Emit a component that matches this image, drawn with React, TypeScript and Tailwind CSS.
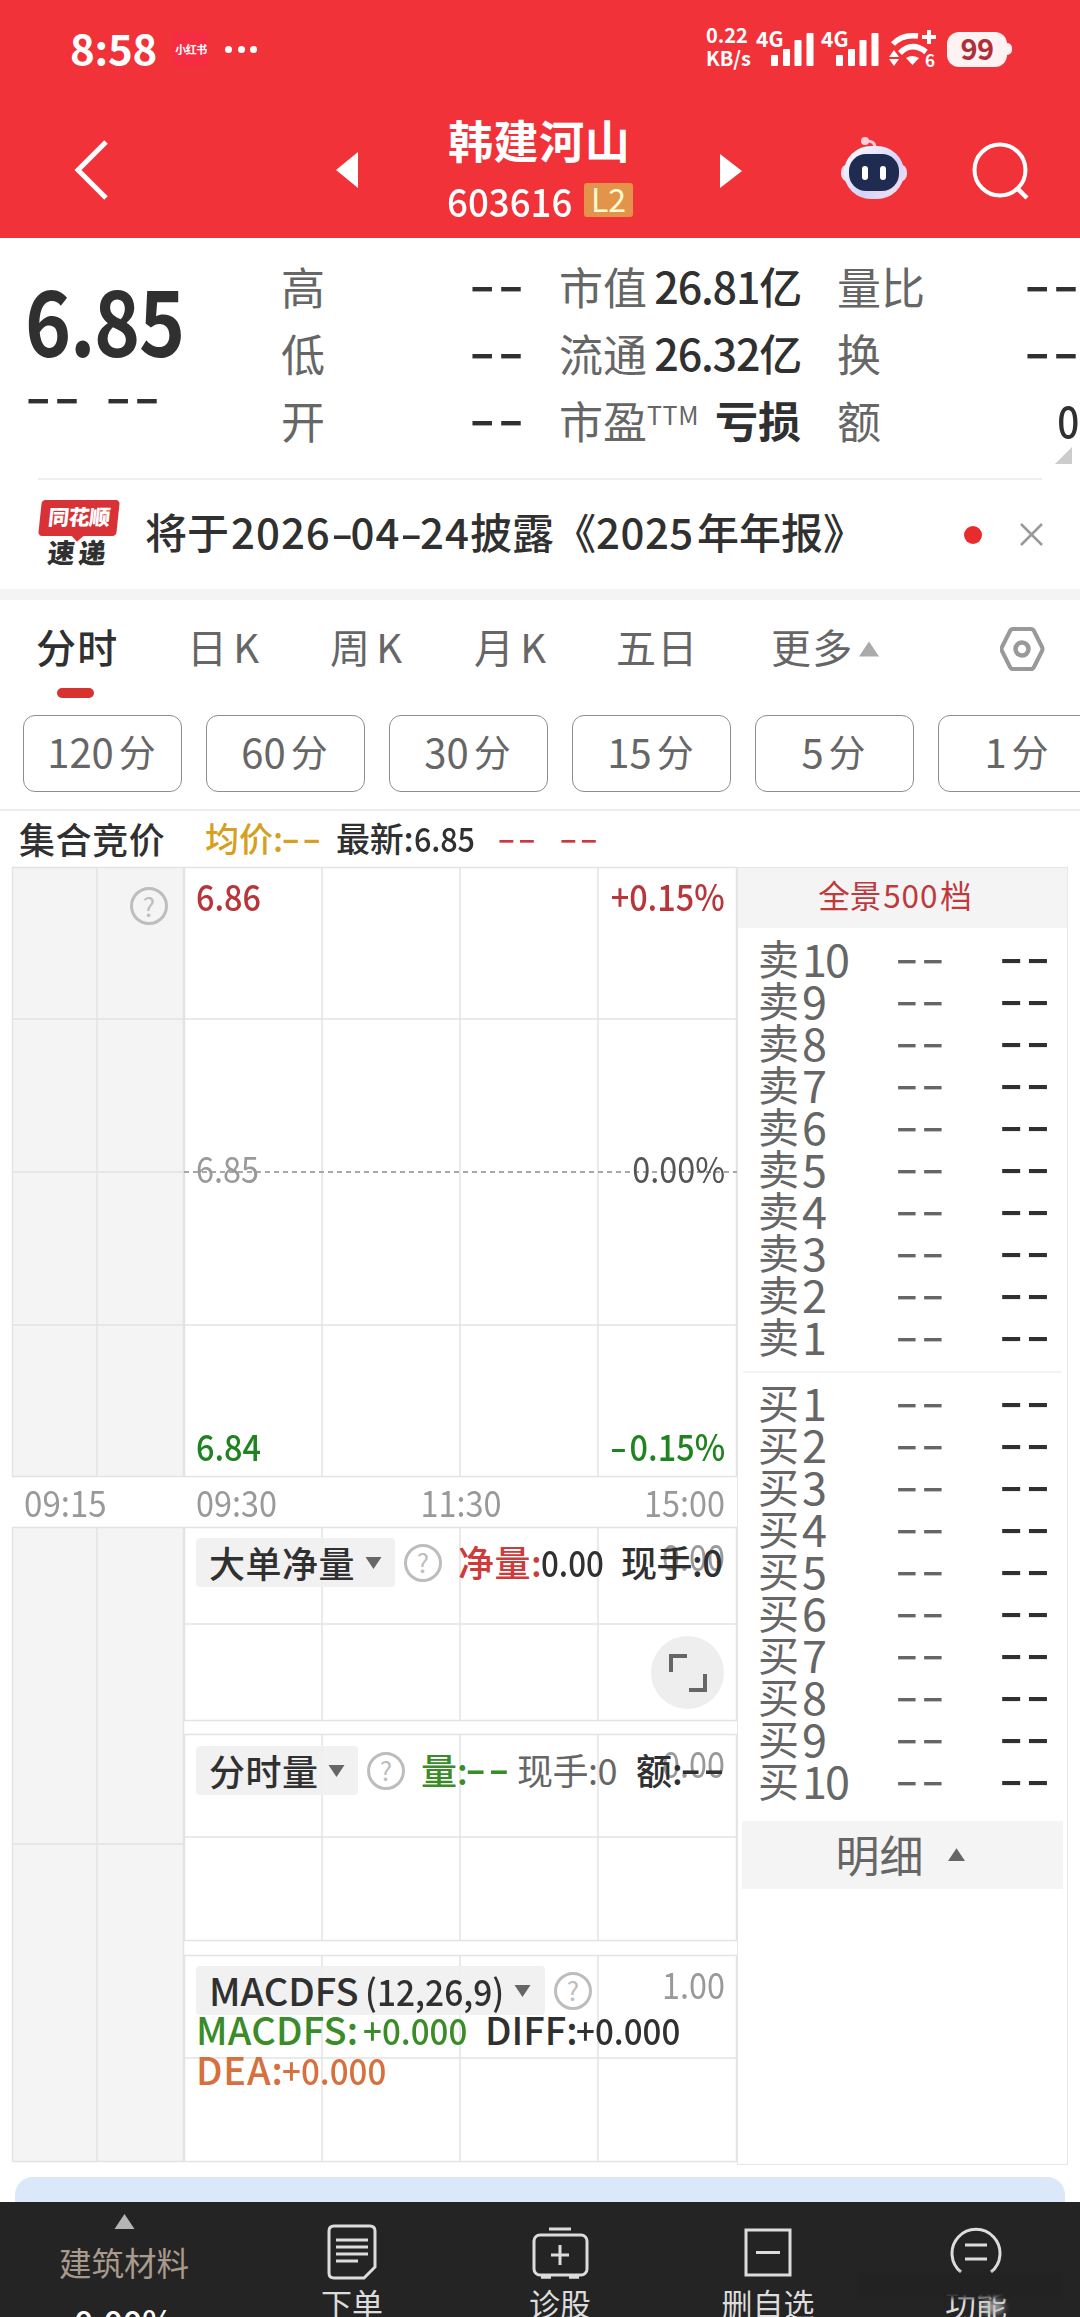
import { clsx } from "clsx";

interface DashProps {
  className?: string;
}

interface GridProps {
  width: number;
  height: number;
  xs: number[];
  ys: number[];
  className?: string;
  dashedY?: number;
}

const SELL = [10, 9, 8, 7, 6, 5, 4, 3, 2, 1];
const BUY = [1, 2, 3, 4, 5, 6, 7, 8, 9, 10];

const PERIODS = ["120", "60", "30", "15", "5", "1"];

// Empty value placeholder, stretched to the width of the quote digits.
const Dash = ({ className }: DashProps) => (
  <span className={clsx("inline-block w-[0.91em] shrink-0 pb-[0.12em] leading-none", className)}>
    <span className="inline-block origin-left scale-x-[1.42] tracking-[0.034em] whitespace-nowrap -ml-[0.06em]">
      --
    </span>
  </span>
);

const Grid = ({ width, height, xs, ys, className, dashedY }: GridProps) => (
  <svg
    width={width}
    height={height}
    className={clsx("block overflow-visible", className)}
    fill="none"
    stroke="#e2e4e4"
    strokeWidth="1.5"
  >
    <rect x="0.5" y="0.5" width={width - 1} height={height - 1} />
    {xs.map((x) => (
      <path key={x} d={`M${x} 0V${height}`} />
    ))}
    {ys.map((y) => (
      <path key={y} d={`M0 ${y}H${width}`} />
    ))}
    {dashedY && (
      <path d={`M0 ${dashedY}H${width}`} stroke="#a8a8a8" strokeWidth="2" strokeDasharray="5 4" />
    )}
  </svg>
);

const Help = ({ className }: DashProps) => (
  <span
    className={clsx(
      "flex size-[38px] shrink-0 items-center justify-center rounded-full border-[3px] border-[#bdbdbd] pb-px text-[26px] leading-none text-[#bdbdbd]",
      className,
    )}
  >
    ?
  </span>
);

const Caret = ({ up, className }: { up?: boolean; className?: string }) => (
  <svg viewBox="0 0 16 12" className={clsx("shrink-0", className)} fill="currentColor">
    <path d={up ? "M8 0L16 12H0Z" : "M0 0H16L8 12Z"} />
  </svg>
);

const Signal = () => (
  <div className="flex">
    <span className="h-[16px] text-[21px] leading-[14px] font-bold tracking-[0.2px]">4G</span>
    <svg width="43" height="36" className="-ml-[13px]" fill="#fff">
      <rect x="0" y="24" width="7" height="11" rx="1" />
      <rect x="12" y="18" width="7" height="17" rx="1" />
      <rect x="23.5" y="9" width="7" height="26" rx="1" />
      <rect x="35.5" y="2" width="7" height="33" rx="1" />
    </svg>
  </div>
);

const StatusBar = () => (
  <div className="flex h-[98px] items-center text-white">
    <span className="ml-[70px] w-[87px] pb-[4px] text-[42px] leading-none font-bold tracking-[-0.2px] whitespace-nowrap">
      8:58
    </span>
    <span className="ml-[16px] flex h-[36px] w-[36px] items-center justify-center rounded-lg bg-[#f62c42] text-[11px] leading-none font-bold tracking-[-0.5px] whitespace-nowrap">
      小红书
    </span>
    <span className="ml-[16px] flex w-[32px] justify-between">
      <i className="size-[7px] rounded-full bg-white" />
      <i className="size-[7px] rounded-full bg-white" />
      <i className="size-[7px] rounded-full bg-white" />
    </span>
    <div className="ml-[449px] w-[49px] pb-[7px] text-[20px] leading-[23px] font-bold">
      <div>0.22</div>
      <div className="text-[20px]">KB/s</div>
    </div>
    <div className="ml-[1px] w-[65px]">
      <Signal />
    </div>
    <div className="w-[65px]">
      <Signal />
    </div>
    <svg width="50" height="40" viewBox="0 0 50 40" className="ml-[3px]" fill="none" stroke="#fff">
      <path d="M4 15Q13 5 29 7" strokeWidth="5.500" />
      <path d="M11 24Q23 12 37 23" strokeWidth="5.500" />
      <path d="M17 29Q23 25 30 29L23.500 36Z" fill="#fff" stroke="none" />
      <path d="M5 21L10 28H0ZM5 37L10 30H0Z" fill="#fff" stroke="none" />
      <path d="M33 8H47M40 1V15" strokeWidth="4" />
      <text x="36" y="38" fontSize="17" fontWeight="700" fill="#fff" stroke="none">
        6
      </text>
    </svg>
    <div className="ml-[8px] flex h-[35px] w-[60px] items-center justify-center rounded-[12px] bg-[#fff2f2] pb-[3px] text-[29px] leading-none font-bold tracking-[-0.5px] text-[#ae2f38]">
      99
    </div>
    <i className="h-[12px] w-[5px] rounded-r-md bg-[#fff2f2]" />
  </div>
);

const Robot = () => (
  <svg width="66" height="64" viewBox="0 0 66 64" className="ml-[99px]">
    <defs>
      <linearGradient id="shell" x1="0" y1="0" x2="1" y2="1">
        <stop offset="0" stopColor="#fff" />
        <stop offset="0.6" stopColor="#d5d3fb" />
        <stop offset="1" stopColor="#fde3ea" />
      </linearGradient>
    </defs>
    <path d="M24 5Q34 4 34 12" fill="none" stroke="#f9c9d6" strokeWidth="3" />
    <circle cx="24" cy="5" r="4" fill="#fbd0d8" />
    <rect x="0" y="28" width="66" height="18" rx="8" fill="#f1dbf0" />
    <rect x="3" y="10" width="60" height="53" rx="27" fill="url(#shell)" />
    <rect x="8" y="18" width="50" height="37" rx="17" fill="#202b52" />
    <rect x="21" y="30" width="6" height="14" rx="3" fill="#fff" />
    <rect x="39" y="30" width="6" height="14" rx="3" fill="#fff" />
  </svg>
);

const TitleBar = () => (
  <div className="flex h-[140px] items-center text-white">
    <svg width="34" height="60" className="mt-[3px] ml-[74px]" fill="none" stroke="#fff" strokeWidth="5">
      <path d="M32 2L4 30L32 58" />
    </svg>
    <svg width="22" height="36" className="mt-1 ml-[228px]" fill="#fff">
      <path d="M22 0V36L0 18Z" />
    </svg>
    <div className="ml-[90px] w-[185px]">
      <div className="text-[45px] leading-[54px] font-bold tracking-[0.6px] whitespace-nowrap">
        韩建河山
      </div>
      <div className="flex h-[56px] items-center pt-[6px]">
        <span className="-ml-px w-[137px] pt-[4px] text-[39px] leading-none font-medium">
          <span className="inline-block origin-left scale-x-[0.94]">603616</span>
        </span>
        <span className="mt-[4px] flex h-[34px] w-[49px] items-center justify-center rounded-[3px] bg-[#e3944a] pb-1 text-[32px] leading-none text-[#fffbd0]">
          L2
        </span>
      </div>
    </div>
    <svg width="22" height="34" className="mt-[5px] ml-[87px]" fill="#fff">
      <path d="M0 0V34L22 17Z" />
    </svg>
    <Robot />
    <svg width="58" height="60" className="mt-[6px] ml-[65px]" fill="none" stroke="#fff">
      <circle cx="28" cy="29" r="25.500" strokeWidth="4" />
      <path d="M45 47L55 57" strokeWidth="4.500" />
    </svg>
  </div>
);

const label = "text-[44px] leading-none text-[#666]";
const value = "text-[43px] leading-none font-medium text-[#303030] tracking-[-1.2px]";
const row = "flex h-[67px] items-center justify-between whitespace-nowrap";

const Quote = () => (
  <div className="flex h-[240px] shrink-0 pt-[14px] text-[#303030]">
    <div className="w-[255px] ml-[25px] pt-[21px]">
      <div className="h-[88px] w-[160px] origin-left scale-x-[0.86] text-[91px] leading-[88px] font-bold tracking-[-1.5px]">
        6.85
      </div>
      <div className="mt-[7px] flex gap-[33px] pl-[3px] text-[52px] font-medium leading-none">
        <Dash />
        <Dash />
      </div>
    </div>
    <div className="ml-px w-[238px]">
      {["高", "低", "开"].map((name) => (
        <div key={name} className={row}>
          <span className={label}>{name}</span>
          <Dash className="text-[52px] font-medium" />
        </div>
      ))}
    </div>
    <div className="ml-[40px] w-[242px]">
      <div className={row}>
        <span className={label}>市值</span>
        <span className={value}>26.81亿</span>
      </div>
      <div className={row}>
        <span className={label}>流通</span>
        <span className={value}>26.32亿</span>
      </div>
      <div className={row}>
        <span className={clsx(label, "flex items-start")}>
          市盈<span className="pt-[4px] text-[25px] tracking-[0.6px]">TTM</span>
        </span>
        <span className="text-[43px] leading-none font-bold">亏损</span>
      </div>
    </div>
    <div className="relative ml-[36px] w-[241px]">
      <div className={row}>
        <span className={label}>量比</span>
        <Dash className="mr-[4px] text-[52px] font-medium" />
      </div>
      <div className={row}>
        <span className={label}>换</span>
        <Dash className="mr-[4px] text-[52px] font-medium" />
      </div>
      <div className={row}>
        <span className={label}>额</span>
        <span className={clsx(value, "origin-right scale-x-[0.9]")}>0</span>
      </div>
      <svg width="17" height="17" className="absolute top-[195px] right-[6px]" fill="#ccc">
        <path d="M17 0V17H0Z" />
      </svg>
    </div>
  </div>
);

// Hyphen of a date, as wide as a digit.
const Wide = () => <span className="inline-block w-[22px] origin-left scale-x-[1.5]">-</span>;

const News = () => (
  <div className="mx-[38px] flex h-[111px] shrink-0 items-center border-t-2 border-[#efefef] text-[#303030]">
    <div className="-mt-[3px] flex w-[82px] shrink-0 flex-col items-center">
      <div className="relative flex h-[36px] w-[78px] -skew-x-6 items-center justify-center rounded-[4px] bg-[#d93236] pb-1 text-[21px] leading-none font-black tracking-[-0.5px] text-white">
        同花顺
        <i className="absolute -bottom-[4px] left-[35px] size-[9px] rotate-45 bg-[#d93236]" />
      </div>
      <div className="mt-[2px] -skew-x-6 text-[27px] leading-[28px] font-black tracking-[4px]">速递</div>
    </div>
    <div className="ml-[25px] flex w-[781px] shrink-0 pb-[8px] text-[42px] leading-none font-medium whitespace-nowrap">
      将于
      <span className="flex w-[241px] pl-[2px] tracking-[1px]">
        2026
        <Wide />
        04
        <Wide />
        24
      </span>
      披露《<span className="w-[101px] tracking-[0.5px]">2025</span>年年报》
    </div>
    <i className="ml-[38px] size-[18px] shrink-0 rounded-full bg-[#e92b2d]" />
    <svg width="23" height="23" className="ml-[38px] shrink-0" stroke="#999" strokeWidth="2.500">
      <path d="M1 1L22 22M22 1L1 22" />
    </svg>
  </div>
);

const Tabs = () => (
  <div className="relative flex h-[115px] shrink-0 pt-[26px] text-[40px] leading-[40px] tracking-[1.2px] whitespace-nowrap text-[#666]">
    <span className="ml-[36px] w-[151px] font-medium text-[#303030]">
      分时
      <i className="mt-[22px] ml-[21px] block h-[10px] w-[37px] rounded-full bg-[#d7322f]" />
    </span>
    <span className="flex w-[143px] gap-[5px]">
      日<span>K</span>
    </span>
    <span className="flex w-[144px] gap-[5px]">
      周<span>K</span>
    </span>
    <span className="flex w-[142px] gap-[5px]">
      月<span>K</span>
    </span>
    <span className="w-[155px]">五日</span>
    <span>更多</span>
    <Caret up className="mt-[14px] ml-[6px] h-[18px] w-[20px] text-[#aaa]" />
    <svg width="46" height="44" className="mt-[1px] ml-[121px]" fill="none" stroke="#999" strokeWidth="4">
      <path d="M13 2H31Q33 2 34 4L42 20Q43 22 42 24L34 40Q33 42 31 42H13Q11 42 10 40L2 24Q1 22 2 20L10 4Q11 2 13 2Z" />
      <circle cx="22" cy="22" r="6.500" strokeWidth="4.500" />
    </svg>
  </div>
);

const Periods = () => (
  <div className="flex h-[94px] shrink-0 gap-[24px] overflow-hidden pl-[23px]">
    {PERIODS.map((p) => (
      <div
        key={p}
        className="flex h-[77px] w-[159px] shrink-0 items-center justify-center rounded-[12px] border border-[#8d8d8d] pr-[2px] pb-[5px] text-[40px] leading-none text-[#666]"
      >
        {p}
        <span className="ml-[5px] text-[37px]">分</span>
      </div>
    ))}
  </div>
);

const Summary = () => (
  <div className="flex h-[58px] shrink-0 items-center border-t-2 border-[#ededed] pb-[2px] text-[34px] leading-none whitespace-nowrap text-[#303030]">
    <span className="ml-[19px] w-[186px] text-[36px] font-medium tracking-[0.6px]">集合竞价</span>
    <span className="flex w-[131px] items-center font-medium text-[#d5a021]">
      均价:
      <Dash className="text-[38px]" />
    </span>
    <span className="w-[163px] font-medium tracking-[-0.2px]">
      最新:<span className="inline-block origin-left scale-x-[0.9]">6.85</span>
    </span>
    <Dash className="text-[38px] text-[#c93a40]" />
    <Dash className="ml-[28px] text-[38px] text-[#c93a40]" />
  </div>
);

const AuctionColumn = () => (
  <div className="w-[172px] shrink-0">
    <div className="relative">
      <Grid width={172} height={610} xs={[85]} ys={[152, 305, 458]} className="bg-[#f4f4f4]" />
      <Help className="absolute top-[20px] right-[16px]" />
    </div>
    <div className="flex h-[50px] items-center pb-[2px] pl-[12px] text-[36px] leading-none text-[#999]">
      <span className="origin-left scale-x-[0.92]">09:15</span>
    </div>
    <Grid width={172} height={635} xs={[85]} ys={[317]} className="bg-[#f4f4f4]" />
  </div>
);

const chip = "flex h-[49px] items-center rounded-[4px] bg-[#f0f0f0]/90 pb-[2px] pl-[13px] font-medium text-[#303030]";
const axisLeft = "origin-left scale-x-[0.9]";
const axisRight = "origin-right scale-x-[0.9]";

const Charts = () => (
  <div className="w-[553px] shrink-0 text-[36px] leading-none whitespace-nowrap text-[#999]">
    <div className="relative">
      <Grid width={553} height={610} xs={[138, 276, 414]} ys={[152, 458]} dashedY={305} />
      <div className="absolute inset-0 flex flex-col justify-between px-[12px] pt-[10px] pb-[14px]">
        <div className="flex justify-between font-medium text-[#b8363a]">
          <span className={axisLeft}>6.86</span>
          <span className={axisRight}>+0.15%</span>
        </div>
        <div className="-mt-[7px] flex justify-between">
          <span className={axisLeft}>6.85</span>
          <span className={clsx(axisRight, "text-[#555]")}>0.00%</span>
        </div>
        <div className="flex justify-between font-medium text-[#1f831f]">
          <span className={axisLeft}>6.84</span>
          <span className={clsx(axisRight, "flex")}>
            <Wide />
            0.15%
          </span>
        </div>
      </div>
    </div>
    <div className="flex h-[50px] items-center justify-between px-[12px] pb-[2px]">
      <span className={clsx(axisLeft, "w-[90px]")}>09:30</span>
      <span className="scale-x-[0.9]">11:30</span>
      <span className={axisRight}>15:00</span>
    </div>

    <div className="relative">
      <Grid width={553} height={194} xs={[138, 276, 414]} ys={[97]} />
      <span className={clsx("absolute top-[10px] right-[12px]", axisRight)}>0.00</span>
      <div className="absolute top-[11px] left-[12px] flex items-center">
        <span className={clsx(chip, "w-[199px] tracking-[0.5px]")}>
          大单净量
          <Caret className="mt-[2px] ml-[10px] h-[12px] w-[17px] text-[#666]" />
        </span>
        <Help className="ml-[9px]" />
        <span className="ml-[16px] w-[83px] pb-[4px] font-medium tracking-[0.5px] text-[#cf3a3a]">净量:</span>
        <span className="w-[80px] origin-left scale-x-[0.87] pb-[4px] font-medium text-[#303030]">0.00</span>
        <span className="pb-[4px] font-medium tracking-[-0.5px] text-[#303030]">现手:0</span>
      </div>
      <div className="absolute top-[109px] right-[13px] flex size-[73px] items-center justify-center rounded-full bg-[#eee]">
        <svg width="38" height="38" fill="none" stroke="#666" strokeWidth="4">
          <path d="M2 18V2H18M36 20V36H20" />
        </svg>
      </div>
    </div>

    <div className="relative mt-[13px]">
      <Grid width={553} height={207} xs={[138, 276, 414]} ys={[103]} />
      <span className={clsx("absolute top-[10px] right-[12px]", axisRight)}>0.00</span>
      <div className="absolute top-[11px] left-[12px] flex items-center">
        <span className={clsx(chip, "w-[162px] tracking-[0.5px]")}>
          分时量
          <Caret className="mt-[2px] ml-[9px] h-[12px] w-[17px] text-[#666]" />
        </span>
        <Help className="ml-[9px]" />
        <span className="ml-[16px] flex w-[96px] items-center pb-[4px] font-medium text-[#3a8c28]">
          量:
          <Dash className="text-[42px]" />
        </span>
        <span className="w-[119px] pb-[4px] tracking-[-0.5px] text-[#666]">现手:0</span>
        <span className="flex items-center pb-[4px] font-medium text-[#303030]">
          额:
          <Dash className="text-[42px]" />
        </span>
      </div>
    </div>

    <div className="relative mt-[14px]">
      <Grid width={553} height={207} xs={[138, 276, 414]} ys={[103]} />
      <span className={clsx("absolute top-[10px] right-[12px]", axisRight)}>1.00</span>
      <div className="absolute top-[11px] left-[12px]">
        <div className="flex items-center">
          <span className={clsx(chip, "w-[349px]")}>
            <span className="w-[156px] text-[38px]">MACDFS</span>
            <span className="w-[138px] origin-left scale-x-[0.93]">(12,26,9)</span>
            <Caret className="mt-[2px] ml-[11px] h-[12px] w-[17px] text-[#666]" />
          </span>
          <Help className="ml-[9px]" />
        </div>
        <div className="-mt-[6px] flex leading-[40px] font-medium">
          <span className="w-[167px] text-[38px] tracking-[0.2px] text-[#3a8c28]">MACDFS:</span>
          <span className="w-[122px] origin-left scale-x-[0.92] text-[#3a8c28]">+0.000</span>
          <span className="w-[91px] text-[38px] text-[#303030]">DIFF:</span>
          <span className="origin-left scale-x-[0.92] text-[#303030]">+0.000</span>
        </div>
        <div className="flex leading-[40px] font-medium text-[#d6703c]">
          <span className="w-[86px] text-[38px] tracking-[0.8px]">DEA:</span>
          <span className="origin-left scale-x-[0.92]">+0.000</span>
        </div>
      </div>
    </div>
  </div>
);

const Level = ({ side, n }: { side: string; n: number }) => (
  <div className="flex h-[42px] items-center text-[41px] leading-none whitespace-nowrap text-[#666]">
    <span className="flex w-[140px] items-center">
      {side}
      <span className="ml-[3px] text-[45px] tracking-[-2px]">{n}</span>
    </span>
    <Dash className="text-[48px]" />
    <Dash className="ml-[60px] text-[48px] font-medium text-[#303030]" />
  </div>
);

const OrderBook = () => (
  <div className="h-[1298px] w-[331px] border border-[#e6e8e8]">
    <div className="flex h-[60px] items-center justify-center bg-[#f4f4f4] pr-[15px] pb-[6px] text-[31.500px] leading-none text-[#c0393c]">
      全景
      <span className="mx-[2px] tracking-[0.8px]">500</span>档
    </div>
    <div className="pt-[8px] pl-[20px]">
      {SELL.map((n) => (
        <Level key={n} side="卖" n={n} />
      ))}
    </div>
    <div className="mx-[5px] mt-[15px] h-[2px] bg-[#f3f3f3]" />
    <div className="pt-[7px] pl-[20px]">
      {BUY.map((n) => (
        <Level key={n} side="买" n={n} />
      ))}
    </div>
    <div className="mx-[4px] mt-[21px] flex h-[68px] items-center justify-center bg-[#f4f4f4] pr-[5px] pb-[3px] text-[44px] leading-none text-[#666]">
      明细
      <Caret up className="mt-[2px] ml-[24px] h-[13px] w-[17px]" />
    </div>
  </div>
);

const nav = "flex shrink-0 flex-col items-center text-[31px] leading-[36px] whitespace-nowrap text-[#dcdcdc]";
const navIcon = "mt-[22px] mb-[5px] shrink-0";

const BottomBar = () => (
  <div className="relative flex h-[115px] shrink-0 overflow-hidden bg-[#242424]">
    <div className="ml-[24px] flex w-[200px] shrink-0 flex-col items-center">
      <Caret up className="mt-[12px] h-[15px] w-[25px] text-[#b5b5b5]" />
      <span className="mt-[15px] text-[32.500px] leading-[36px] whitespace-nowrap text-[#a89a8c]">建筑材料</span>
      <span className="mt-[24px] text-[34px] leading-[34px] font-medium text-white">0.00%</span>
    </div>
    <div className={clsx(nav, "ml-[58px] w-[140px]")}>
      <svg width="50" height="56" className={navIcon} fill="none" stroke="#dcdcdc" strokeWidth="3">
        <path d="M7 2H43Q48 2 48 7V43L37 54H7Q2 54 2 49V7Q2 2 7 2Z" />
        <path d="M9 16H41M9 23H41M9 30H41M9 37H31" />
      </svg>
      下单
    </div>
    <div className={clsx(nav, "ml-[68px] w-[140px]")}>
      <svg width="58" height="56" className={navIcon} fill="none" stroke="#dcdcdc" strokeWidth="3">
        <rect x="3" y="11" width="53" height="40" rx="6" />
        <path d="M18 5H40M29 21V41M20 31H38" />
        <path d="M10 53H20M38 53H48" strokeWidth="3.500" />
      </svg>
      诊股
    </div>
    <div className={clsx(nav, "ml-[68px] w-[140px]")}>
      <svg width="48" height="56" className={navIcon} fill="none" stroke="#dcdcdc" strokeWidth="3">
        <rect x="2" y="6" width="44" height="45" />
        <path d="M12 28.500H36" />
      </svg>
      删自选
    </div>
    <div className={clsx(nav, "ml-[68px] w-[140px]")}>
      <svg width="52" height="56" className={navIcon} fill="none" stroke="#dcdcdc" strokeWidth="3">
        <path d="M11 48A24 24 0 1 1 41 48" />
        <path d="M15 21H37M15 35H37" />
      </svg>
      功能
    </div>
    <i className="absolute top-[72px] left-[860px] h-[24px] w-[200px] bg-[#222] blur-[2px]" />
    <i className="absolute top-[98px] left-[982px] h-[14px] w-[22px] rounded-full bg-[#bbb]/70 blur-[3px]" />
  </div>
);

export default function App() {
  return (
    <div className="flex h-[2317px] w-[1080px] flex-col overflow-hidden bg-white font-['Noto_Sans_CJK_SC',sans-serif]">
      <header className="h-[238px] shrink-0 bg-[#f23239]">
        <StatusBar />
        <TitleBar />
      </header>
      <Quote />
      <News />
      <div className="h-[11px] shrink-0 bg-[#f4f4f4]" />
      <Tabs />
      <Periods />
      <Summary />
      <main className="flex h-[1310px] shrink-0 pl-[12px]">
        <AuctionColumn />
        <Charts />
        <OrderBook />
      </main>
      <div className="mx-[15px] h-[25px] shrink-0 rounded-t-[18px] bg-[#dbe8f9]" />
      <BottomBar />
    </div>
  );
}
